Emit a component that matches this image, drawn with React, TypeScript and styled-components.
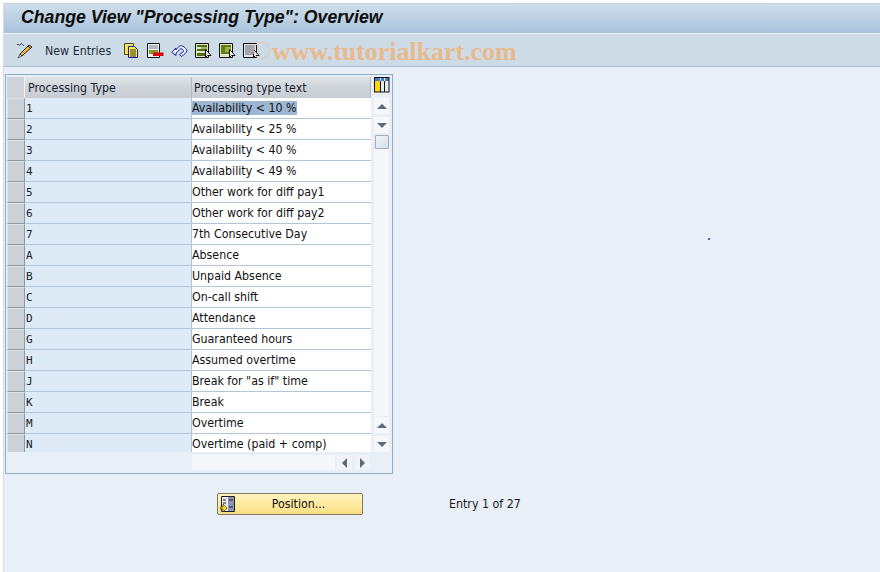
import React from "react";
import styled, { createGlobalStyle } from "styled-components";

const Global = createGlobalStyle`
  html, body { margin: 0; padding: 0; background: #e8eff6; }
  #root { width: 880px; height: 572px; overflow: hidden; }
`;

const Page = styled.div`
  position: relative;
  width: 880px;
  height: 572px;
  box-sizing: border-box;
  padding: 3px 0 0 3px;
  background: #fff;
  font-family: "DejaVu Sans Condensed", "DejaVu Sans", Tahoma, sans-serif;
  font-stretch: condensed;
  font-size: 12.3px;
  color: #111;
`;

const Shell = styled.div`
  height: 569px;
  background: #e8eff6;
  border-left: 1px solid #d3dde8;
  border-top: 1px solid #c4d2df;
  display: flex;
  flex-direction: column;
`;

const TitleBar = styled.div`
  height: 30px;
  box-sizing: border-box;
  padding: 1px 0 0 17px;
  background: linear-gradient(#cfdeeb, #a9c3da);
  border-bottom: 1px solid #edf3f8;
  font-family: "Liberation Sans", Arial, sans-serif;
  font-stretch: normal;
  font-weight: bold;
  font-style: italic;
  font-size: 17.7px;
  line-height: 25px;
  color: #0c0c0c;
  white-space: nowrap;
`;

const Toolbar = styled.div`
  height: 33px;
  box-sizing: border-box;
  background: #cddbe7;
  border-bottom: 1px solid #a9bfd3;
  display: flex;
  align-items: center;
  padding: 1px 0 0 12px;
  position: relative;
`;

const ToolIcon = styled.svg<{ $gap?: number }>`
  width: 17px;
  height: 17px;
  margin-right: ${(p) => p.$gap ?? 7}px;
  flex: none;
`;

const ToolLabel = styled.span`
  margin: 0 12px 0 12px;
  color: #1c2b3a;
`;

const Watermark = styled.span`
  position: absolute;
  left: 268px;
  top: 3px;
  font-family: "Liberation Serif", "Times New Roman", serif;
  font-stretch: normal;
  font-weight: bold;
  font-size: 25.9px;
  line-height: 30px;
  color: #e8b98b;
  white-space: nowrap;
`;

const WatermarkRing = styled.span`
  position: absolute;
  left: 249px;
  top: 8px;
  width: 15px;
  height: 15px;
  border: 1px solid #e9c6a4;
  border-radius: 50%;
`;

const Content = styled.div`
  flex: 1;
  padding: 7px 0 0 1px;
  display: flex;
  flex-direction: column;
`;

const TableFrame = styled.div`
  width: 388px;
  height: 400px;
  box-sizing: border-box;
  border: 1px solid #8fadca;
  padding: 2px 3px 0 1px;
  display: grid;
  grid-template-columns: 366px 18px;
  grid-template-rows: 375px 1fr;
  background: #e8eff6;
`;

const TableGrid = styled.div`
  display: grid;
  grid-template-columns: 18px 167px 179px;
  grid-auto-rows: 21px;
  height: 375px;
  overflow: hidden;
`;

const Corner = styled.div`
  background: #cdd3d9;
  border-right: 1px solid #f1f4f7;
  box-sizing: border-box;
`;

const HeadCell = styled.div<{ $pad: number }>`
  background: linear-gradient(#e1e5e9, #d0d5da 45%, #c8cdd4);
  border-right: 1px solid #aeb9c5;
  box-sizing: border-box;
  padding-left: ${(p) => p.$pad}px;
  line-height: 22px;
  color: #17222e;
  white-space: nowrap;
  overflow: hidden;
`;

const RowHead = styled.div`
  box-sizing: border-box;
  background: #ccd1d7;
  border: 1px solid #dfe4e9;
  border-right-color: #8e98a3;
  border-bottom-color: #8e98a3;
`;

const KeyCell = styled.div`
  background: #deeaf5;
  border-bottom: 1px solid #b3c6d8;
  border-right: 1px solid #b3c6d8;
  box-sizing: border-box;
  padding: 1px 0 0 1px;
  font-family: "DejaVu Sans Mono", "Liberation Mono", monospace;
  font-stretch: normal;
  font-size: 11px;
  line-height: 19px;
  color: #17222e;
`;

const TextCell = styled.div`
  background: #fff;
  border-bottom: 1px solid #b3c6d8;
  box-sizing: border-box;
  padding-top: 1px;
  line-height: 19px;
  white-space: nowrap;
  overflow: hidden;
`;

const Selected = styled.span`
  background: #9db7d3;
`;

const ScrollColumn = styled.div`
  display: flex;
  flex-direction: column;
  align-items: flex-start;
  height: 375px;
  padding-left: 1px;
  box-sizing: border-box;
`;

const LayoutButton = styled.svg`
  width: 16px;
  height: 16px;
  margin-bottom: 5px;
  flex: none;
`;

const ArrowButton = styled.div`
  width: 15px;
  height: 16px;
  margin-bottom: 3px;
  flex: none;
  background: #f5f7fa;
  display: flex;
  align-items: center;
  justify-content: center;
  &:last-child {
    margin-bottom: 0;
  }
`;

const Thumb = styled.div`
  width: 14px;
  height: 14px;
  margin: -1px 0 0 1px;
  flex: none;
  box-sizing: border-box;
  border: 1px solid #a3adb8;
  border-radius: 1px;
  background: linear-gradient(135deg, #f1f5f9, #d4e0ea);
`;

const Track = styled.div`
  width: 15px;
  flex: 1;
  margin-bottom: 1px;
  background: #f5f7fa;
`;

const ArrowUp = styled.span`
  border-left: 5px solid transparent;
  border-right: 5px solid transparent;
  border-bottom: 5px solid #5b6b7b;
`;

const ArrowDown = styled.span`
  border-left: 5px solid transparent;
  border-right: 5px solid transparent;
  border-top: 5px solid #5b6b7b;
`;

const ArrowLeft = styled.span`
  border-top: 5px solid transparent;
  border-bottom: 5px solid transparent;
  border-right: 5px solid #5b6b7b;
`;

const ArrowRight = styled.span`
  border-top: 5px solid transparent;
  border-bottom: 5px solid transparent;
  border-left: 5px solid #5b6b7b;
`;

const HScroll = styled.div`
  grid-column: 1 / 3;
  display: flex;
  padding: 3px 0 0 185px;
  align-items: flex-start;
`;

const HTrack = styled.div`
  width: 143px;
  height: 15px;
  background: #f5f7fa;
  margin-right: 2px;
`;

const HArrow = styled.div`
  width: 15px;
  height: 15px;
  margin-right: 3px;
  background: #f0f3f7;
  display: flex;
  align-items: center;
  justify-content: center;
`;

const Footer = styled.div`
  display: flex;
  align-items: center;
  margin-top: 19px;
  padding-left: 212px;
`;

const PositionButton = styled.button`
  width: 146px;
  height: 22px;
  box-sizing: border-box;
  padding: 0 0 0 2px;
  margin: 0;
  border: 1px solid #7f7a64;
  border-radius: 2px;
  background: linear-gradient(#fff3c0, #fde795 70%, #f8dc84);
  display: flex;
  align-items: center;
  font: inherit;
  color: #111;
  cursor: pointer;
`;

const PositionLabel = styled.span`
  flex: 1;
  text-align: center;
`;

const EntryInfo = styled.span`
  margin-left: 86px;
  color: #1a1a1a;
`;

const Speck = styled.span`
  position: absolute;
  left: 708px;
  top: 238px;
  width: 2px;
  height: 2px;
  background: #3a62c8;
`;

const rows: [string, string][] = [
  ["1", "Availability < 10 %"],
  ["2", "Availability < 25 %"],
  ["3", "Availability < 40 %"],
  ["4", "Availability < 49 %"],
  ["5", "Other work for diff pay1"],
  ["6", "Other work for diff pay2"],
  ["7", "7th Consecutive Day"],
  ["A", "Absence"],
  ["B", "Unpaid Absence"],
  ["C", "On-call shift"],
  ["D", "Attendance"],
  ["G", "Guaranteed hours"],
  ["H", "Assumed overtime"],
  ["J", 'Break for "as if" time'],
  ["K", "Break"],
  ["M", "Overtime"],
  ["N", "Overtime (paid + comp)"],
];

const Pencil = () => (
  <ToolIcon viewBox="0 0 17 17" $gap={0}>
    <path d="M6 14l-2-2 9-9 3 2-9 8z" fill="#f3b544" stroke="#222" />
    <path d="M12 4l3 3" stroke="#222" />
    <path d="M4 12l-2 4 4-2z" fill="#f8e3b0" stroke="#222" strokeWidth=".7" />
    <path d="M1 3c1-2 2 1 3 0s1-2 2-1 1 2 2 1" fill="none" stroke="#223" />
  </ToolIcon>
);

const Copy = () => (
  <ToolIcon viewBox="0 0 17 17">
    <path d="M1.500 1.500h9v11h-9z" fill="#f4dd6a" stroke="#4a4a20" />
    <path d="M5.500 4.500h6l3 3v8h-9z" fill="#ffee30" stroke="#1420b0" />
    <path d="M7 8h6M7 10h6M7 12h6M7 14h6" stroke="#333" />
  </ToolIcon>
);

const Delete = () => (
  <ToolIcon viewBox="0 0 17 17">
    <path d="M.5 1.500h12v14H.5z" fill="#eef1f3" stroke="#111" />
    <path d="M2 4h9M2 6h9" stroke="#7a8088" />
    <path d="M2 8h9v4H2z" fill="#7f9b2c" />
    <path d="M6 10.500h10.500v3.500H6z" fill="#e00010" />
  </ToolIcon>
);

const Undo = () => (
  <ToolIcon viewBox="0 0 17 17">
    <path
      d="M.8 10.500l4-4.500v2l3.700-4c3-1 6.700 2 7.500 4.500 0 2-3.500 4.500-5.500 6l-2-2c1.500-1 4-2.500 4-3.500S11 6.500 10 6.500L5 11v2.500z"
      fill="#eef4fc"
      stroke="#1520a8"
    />
  </ToolIcon>
);

const Sheet = ({ tone }: { tone: "mixed" | "green" | "grey" }) => (
  <ToolIcon viewBox="0 0 17 17">
    <path d="M.5 1.500h13v14H.5z" fill={tone === "grey" ? "#dfe4e8" : "#dfe6c8"} stroke="#111" />
    {tone === "mixed" && <path d="M2 3h10v2H2zM2 7h10v2H2zM2 11h10v3H2z" fill="#4f6e16" />}
    {tone === "mixed" && <path d="M6 5h6v2H6z" fill="#a4b84e" />}
    {tone === "green" && <path d="M2 3h10v9H2z" fill="#5f7d16" />}
    {tone === "green" && <path d="M6 5h6v5H6z" fill="#9db13f" />}
    {tone === "grey" && <path d="M2 4h10M2 6h10M2 8h10M2 10h10M2 12h10" stroke="#667" />}
    <path d="M10.500 7.500v8l2-2 3.500 0z" fill="#fff" stroke="#111" />
  </ToolIcon>
);

const Layout = () => (
  <LayoutButton viewBox="0 0 16 16">
    <path d="M0 0h15.500v15.500H0z" fill="#111" />
    <path d="M1 1h13.500v3H1z" fill="#3d7bd4" />
    <path d="M1 4h5v10.500H1z" fill="#ffd800" />
    <path d="M7 4h3v10.500H7zM11 4h3.500v10.500H11z" fill="#e8edf2" />
    <path d="M6 1h1v3H6zM10 1h1v3h-1z" fill="#fff" />
  </LayoutButton>
);

const PositionIcon = () => (
  <svg width="15" height="17" viewBox="0 0 15 17" style={{ flex: "none" }}>
    <path d="M1.500 .5h13v15h-13z" fill="#e8ecf2" stroke="#222" />
    <path d="M8 1h6v14H8z" fill="#8d94b5" />
    <path d="M3 4h3M3 7h3M9 4h4M9 11h4" stroke="#222" />
    <path d="M0 11h3V8l4 4-4 4v-3H0z" fill="#ffe000" stroke="#333" strokeWidth=".7" />
  </svg>
);

export default function App() {
  return (
    <Page>
      <Global />
      <Shell>
        <TitleBar>Change View "Processing Type": Overview</TitleBar>
        <Toolbar>
          <Pencil />
          <ToolLabel>New Entries</ToolLabel>
          <Copy />
          <Delete />
          <Undo />
          <Sheet tone="mixed" />
          <Sheet tone="green" />
          <Sheet tone="grey" />
          <WatermarkRing />
          <Watermark>www.tutorialkart.com</Watermark>
        </Toolbar>
        <Content>
          <TableFrame>
            <TableGrid>
              <Corner />
              <HeadCell $pad={3}>Processing Type</HeadCell>
              <HeadCell $pad={2}>Processing type text</HeadCell>
              {rows.map(([k, t], i) => (
                <React.Fragment key={k}>
                  <RowHead />
                  <KeyCell>{k}</KeyCell>
                  <TextCell>{i === 0 ? <Selected>{t}</Selected> : t}</TextCell>
                </React.Fragment>
              ))}
            </TableGrid>
            <ScrollColumn>
              <Layout />
              <ArrowButton>
                <ArrowUp />
              </ArrowButton>
              <ArrowButton>
                <ArrowDown />
              </ArrowButton>
              <Thumb />
              <Track />
              <ArrowButton>
                <ArrowUp />
              </ArrowButton>
              <ArrowButton>
                <ArrowDown />
              </ArrowButton>
            </ScrollColumn>
            <HScroll>
              <HTrack />
              <HArrow>
                <ArrowLeft />
              </HArrow>
              <HArrow>
                <ArrowRight />
              </HArrow>
            </HScroll>
          </TableFrame>
          <Footer>
            <PositionButton>
              <PositionIcon />
              <PositionLabel>Position...</PositionLabel>
            </PositionButton>
            <EntryInfo>Entry 1 of 27</EntryInfo>
          </Footer>
        </Content>
      </Shell>
      <Speck />
    </Page>
  );
}
